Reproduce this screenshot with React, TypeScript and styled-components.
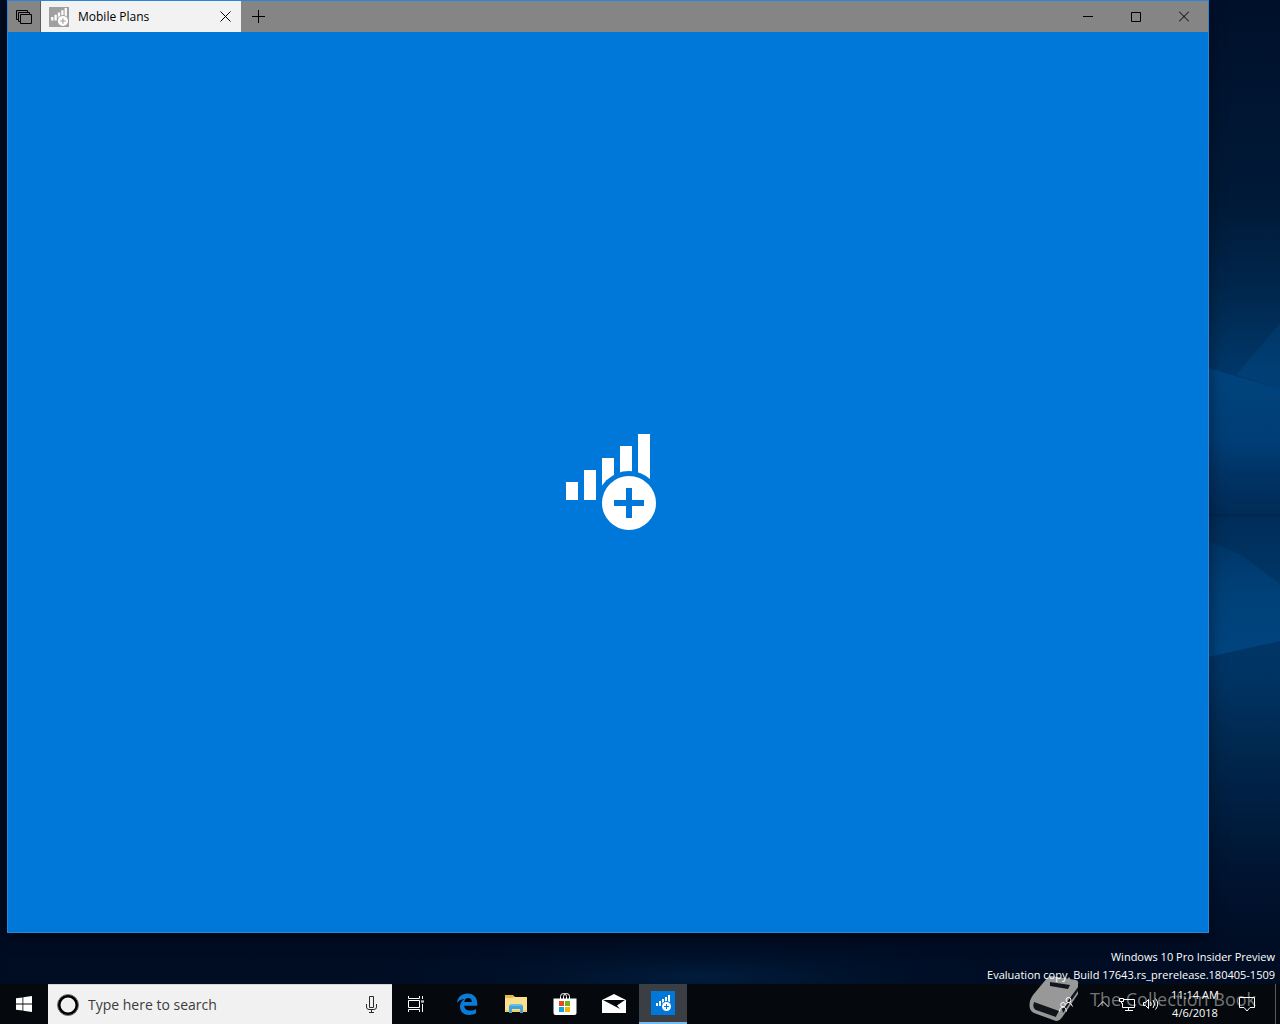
import React from "react";
import styled, { createGlobalStyle } from "styled-components";

const GlobalStyle = createGlobalStyle`
  *, *::before, *::after { box-sizing: border-box; }
  html, body { margin: 0; background: #000c20; }
  body { font-family: "Open Sans", "Noto Sans", sans-serif; font-size: 12px; }
  button, input { font: inherit; color: inherit; border: 0; padding: 0; margin: 0; background: none; border-radius: 0; }
  svg { display: block; flex: none; }
`;

const Screen = styled.div`
  position: relative;
  isolation: isolate;
  display: grid;
  grid-template-rows: 1fr 40px;
  min-height: 100vh;
  overflow: hidden;
`;

const Wallpaper = styled.svg`
  position: absolute;
  inset: 0;
  z-index: -1;
  width: 100%;
  height: 100%;
`;

const Desktop = styled.main`
  position: relative;
  z-index: 1;
  display: flex;
  padding: 0 71px 51px 7px;
`;

const Window = styled.section`
  flex: 1;
  display: flex;
  flex-direction: column;
  border: 1px solid #2b86d6;
  background: #0078d9;
  box-shadow: 0 4px 14px rgba(0, 0, 0, 0.5);
`;

const TitleBar = styled.header`
  display: flex;
  height: 31px;
  background: #858585;
  color: #000;
`;

const BarButton = styled.button<{ $width: number }>`
  display: grid;
  place-items: center;
  width: ${(p) => p.$width}px;
`;

const Tab = styled.div`
  display: flex;
  align-items: center;
  gap: 9px;
  width: 201px;
  padding: 0 8px;
  margin-right: 1px;
  background: #f2f2f2;
  border-left: 1px solid #5b5b5b;
`;

const TabIcon = styled.span`
  display: grid;
  place-items: center;
  width: 20px;
  height: 20px;
  background: #a0a0a0;
`;

const TabTitle = styled.span`
  flex: 1;
  line-height: 18px;
  white-space: nowrap;
`;

const WindowControls = styled.div`
  display: flex;
  margin-left: auto;
`;

const Splash = styled.div`
  flex: 1;
  display: grid;
  place-items: center;
`;

const BuildNotice = styled.p`
  position: absolute;
  right: 5px;
  bottom: 0;
  margin: 0;
  color: #fff;
  font-size: 11px;
  line-height: 18px;
  text-align: right;
  white-space: nowrap;
`;

const Taskbar = styled.footer`
  position: relative;
  display: flex;
  background: #05090d;
  color: #fff;
`;

const TaskButton = styled.button<{ $active?: boolean }>`
  display: grid;
  place-items: center;
  width: 48px;
  background: ${(p) => (p.$active ? "#3b3f44" : "transparent")};
  border-bottom: ${(p) => (p.$active ? "2px solid #76b9ed" : "0")};
`;

const Search = styled.label`
  display: flex;
  align-items: center;
  width: 344px;
  padding: 0 14px 0 8px;
  background: #f1f1f1;
  border-top: 1px solid #d0d5d8;
  color: #2b2b2b;
`;

const SearchInput = styled.input`
  flex: 1;
  min-width: 0;
  margin-left: 8px;
  font-size: 14px;
  outline: none;
  &::placeholder { color: #3c3c3c; opacity: 1; }
`;

const Pins = styled.nav`
  display: flex;
  gap: 1px;
  margin-left: 3px;
`;

const Tray = styled.div`
  position: relative;
  display: flex;
  margin-left: auto;
`;

const TrayButton = styled.button<{ $width: number }>`
  display: grid;
  place-items: center;
  width: ${(p) => p.$width}px;
`;

const Clock = styled.button`
  width: 64px;
  font-size: 11px;
  line-height: 18px;
  text-align: center;
  white-space: nowrap;
`;

const ShowDesktop = styled.button`
  width: 5px;
  margin-left: 8px;
  border-left: 1px solid #5a5d60;
`;

const Watermark = styled.div`
  position: absolute;
  right: 24px;
  bottom: 2px;
  display: flex;
  align-items: center;
  gap: 10px;
  color: rgba(190, 190, 190, 0.6);
  font-size: 18px;
  line-height: 24px;
  white-space: nowrap;
  pointer-events: none;
`;

function SignalPlus({ size, hole }: { size: number; hole: string }) {
  return (
    <svg width={size} height={size} viewBox="0 0 96 96" aria-hidden="true">
      <path fill="#fff" d="M6 48h12v18H6zM24 36h12v30H24zM42 24h12v20l-12 12zM60 12h12v32H60zM78 0h12v46H78z" />
      <circle cx="69" cy="69" r="32" fill={hole} />
      <circle cx="69" cy="69" r="27" fill="#fff" />
      <path d="M69 54v30M54 69h30" stroke={hole} strokeWidth="6" />
    </svg>
  );
}

function Stroke({ w, h, d }: { w: number; h: number; d: string }) {
  return (
    <svg width={w} height={h} viewBox={`0 0 ${w} ${h}`} fill="none" stroke="currentColor" aria-hidden="true">
      <path d={d} />
    </svg>
  );
}

const WindowsLogo = () => (
  <svg width="16" height="16" viewBox="0 0 16 16" fill="#fff" aria-hidden="true">
    <path d="M0 2.3 6.5 1.4v6.2H0zM7.3 1.3 16 0v7.6H7.3zM0 8.4h6.5v6.2L0 13.7zM7.3 8.4H16V16l-8.7-1.3z" />
  </svg>
);

const EdgeLogo = () => (
  <svg width="22" height="22" viewBox="0 0 22 22" fill="#0a7cd8" aria-hidden="true">
    <path d="M1 10C1.500 4 6 .5 11.500 .5c6.500 0 9.700 4.600 9.700 9.600v2.600H8.200c.2 3.300 2.700 4.900 6 4.900 2.200 0 4.200-.6 5.800-1.600v4.300c-2 1.100-4.300 1.600-6.700 1.600-5.500 0-9.300-3.300-9.300-8.500 0-3.200 1.700-5.900 4.500-7.500C4.800 6.300 2.400 7.600 1 10zm7.300-1.100h7.500c0-2.600-1.300-4-3.500-4-2.300 0-3.700 1.600-4 4z" />
  </svg>
);

const FolderIcon = () => (
  <svg width="22" height="20" viewBox="0 0 22 20" aria-hidden="true">
    <path fill="#e8b84a" d="M0 1h8l2 2h11v3H0z" />
    <path fill="#fae08c" d="M0 4h7l2-1h13v15H0z" />
    <path fill="#f2cf68" d="M0 16h22v2H0z" />
    <path fill="#41a5d8" d="M4 19v-7l2-2h10l2 2v7h-3v-4H7v4z" />
    <path fill="#67bfe8" d="M6 10h10l2 2H4z" />
  </svg>
);

const StoreIcon = () => (
  <svg width="24" height="24" viewBox="0 0 24 24" aria-hidden="true">
    <path d="M7.500 7V4.500a3 3 0 0 1 6 0V7M10.500 7V4.500a3 3 0 0 1 6 0V7" fill="none" stroke="#fff" />
    <path fill="#fff" d="M.5 6.500h23V21q0 2-2 2h-19q-2 0-2-2z" />
    <path fill="#e8491d" d="M6 9h5v5H6z" />
    <path fill="#6fb51b" d="M12 9h5v5h-5z" />
    <path fill="#10a3e8" d="M6 15h5v5H6z" />
    <path fill="#f8b400" d="M12 15h5v5h-5z" />
  </svg>
);

const MailIcon = () => (
  <svg width="24" height="20" viewBox="0 0 24 20" aria-hidden="true">
    <path fill="#fff" d="M0 6 12 0l12 6v13H0z" />
    <path fill="#05090d" d="M1 6h22l-8 5.500 3 3.500z" />
  </svg>
);

const BookIcon = () => (
  <svg width="51" height="46" viewBox="0 0 51 46" aria-hidden="true">
    <path fill="#a9a9a9" fillOpacity=".9" d="M19 1q1-1 3-1l25 4q3 1 2 4v10L34 40q-3 5-7 5L5 37q-6-3-4-12 1-3 3-6z" />
    <path fill="#10161c" d="M21 6l20 3-2 4-18-3zM5 26l25 9q-3 5-3 6L7 34q-4-2-2-8zM33 33 49 11v4L34 37z" />
  </svg>
);

export default function App() {
  return (
    <>
      <GlobalStyle />
      <Screen>
        <Wallpaper viewBox="0 0 1280 1024" preserveAspectRatio="none" aria-hidden="true">
          <defs>
            <linearGradient id="side" x1="0" y1="0" x2="0" y2="1">
              <stop offset="0" stopColor="#00102a" />
              <stop offset=".2" stopColor="#001a38" />
              <stop offset=".29" stopColor="#00284f" />
              <stop offset=".36" stopColor="#003768" />
              <stop offset=".43" stopColor="#003a70" />
              <stop offset=".5" stopColor="#002c58" />
              <stop offset=".58" stopColor="#003768" />
              <stop offset=".66" stopColor="#003464" />
              <stop offset=".74" stopColor="#00264c" />
              <stop offset=".84" stopColor="#001634" />
              <stop offset=".92" stopColor="#000d24" />
              <stop offset="1" stopColor="#000b20" />
            </linearGradient>
            <radialGradient id="floor">
              <stop offset="0" stopColor="#001d3d" />
              <stop offset="1" stopColor="#000b20" stopOpacity="0" />
            </radialGradient>
            <linearGradient id="upper" x1="0" y1="0" x2="0" y2="1">
              <stop offset="0" stopColor="#0058a0" stopOpacity=".4" />
              <stop offset="1" stopColor="#0058a0" stopOpacity="0" />
            </linearGradient>
            <linearGradient id="lower" x1="0" y1="1" x2="0" y2="0">
              <stop offset="0" stopColor="#0058a0" stopOpacity=".45" />
              <stop offset="1" stopColor="#0058a0" stopOpacity=".15" />
            </linearGradient>
          </defs>
          <rect width="1280" height="1024" fill="url(#side)" />
          <rect width="8" height="1024" fill="#000c22" />
          <path d="M1236 375 1280 323v66z" fill="#0058a0" fillOpacity=".2" />
          <path d="M1208 368 1280 389v85h-72z" fill="url(#upper)" />
          <path d="M1208 541 1240 554l40 30v57l-72 16z" fill="url(#lower)" />
          <rect x="1208" y="514" width="72" height="3" fill="#002850" />
          <rect x="300" y="930" width="800" height="94" fill="url(#floor)" />
        </Wallpaper>

        <Desktop>
          <Window aria-label="Mobile Plans">
            <TitleBar>
              <BarButton $width={32} aria-label="Show set-aside tabs">
                <Stroke w={16} h={14} d="M.5 9.500v-9h11M2.500 11.500v-9h11M4.500 4.500h11v9h-11zM.5 9.500h2M2.500 11.500h2M11.500 .5v2M13.500 2.500v2" />
              </BarButton>
              <Tab>
                <TabIcon><SignalPlus size={18} hole="#a0a0a0" /></TabIcon>
                <TabTitle>Mobile Plans</TabTitle>
                <BarButton $width={16} aria-label="Close tab">
                  <Stroke w={11} h={11} d="M.5 .5l10 10M10.500 .5l-10 10" />
                </BarButton>
              </Tab>
              <BarButton $width={32} aria-label="New tab">
                <Stroke w={13} h={13} d="M6.500 0v13M0 6.500h13" />
              </BarButton>
              <WindowControls>
                <BarButton $width={48} aria-label="Minimize"><Stroke w={10} h={11} d="M0 5.500h10" /></BarButton>
                <BarButton $width={48} aria-label="Maximize"><Stroke w={10} h={11} d="M.5 1.500h9v9h-9z" /></BarButton>
                <BarButton $width={48} aria-label="Close"><Stroke w={10} h={11} d="M0 .5l10 10M10 .5l-10 10" /></BarButton>
              </WindowControls>
            </TitleBar>
            <Splash><SignalPlus size={96} hole="#0078d9" /></Splash>
          </Window>
          <BuildNotice>
            Windows 10 Pro Insider Preview<br />
            Evaluation copy. Build 17643.rs_prerelease.180405-1509
          </BuildNotice>
        </Desktop>

        <Taskbar>
          <TaskButton aria-label="Start"><WindowsLogo /></TaskButton>
          <Search>
            <svg width="24" height="24" viewBox="0 0 24 24" fill="none" aria-hidden="true">
              <circle cx="12" cy="12" r="9" stroke="#000" strokeWidth="3" />
              <circle cx="12" cy="12" r="10.500" stroke="#777" strokeWidth="1" />
            </svg>
            <SearchInput type="text" placeholder="Type here to search" aria-label="Type here to search" />
            <Stroke w={13} h={17} d="M4.500 .5h4v11h-4zM1.500 8v3q0 2.500 2.500 2.500h5q2.500 0 2.500-2.500V8M6.500 13.500v3M4 16.500h5" />
          </Search>
          <TaskButton aria-label="Task View">
            <Stroke w={17} h={16} d="M.5 0v2.500h11V0M.5 4.500h11v7H.5zM.5 16v-2.500h11V16M14.500 0v3M14.500 8v8M13 5h3M13 6h3" />
          </TaskButton>
          <Pins aria-label="Pinned apps">
            <TaskButton aria-label="Microsoft Edge"><EdgeLogo /></TaskButton>
            <TaskButton aria-label="File Explorer"><FolderIcon /></TaskButton>
            <TaskButton aria-label="Microsoft Store"><StoreIcon /></TaskButton>
            <TaskButton aria-label="Mail"><MailIcon /></TaskButton>
            <TaskButton $active aria-label="Mobile Plans">
              <svg width="24" height="24" viewBox="0 0 24 24" aria-hidden="true">
                <path fill="#0078d9" d="M0 0h24v24H0z" />
                <path fill="#fff" d="M5 12h2v3H5zM8 10h2v5H8zM11 8h2v5h-2zM14 6h2v5h-2zM17 4h2v8h-2z" />
                <circle cx="15.500" cy="15.500" r="5.500" fill="#0078d9" />
                <circle cx="15.500" cy="15.500" r="4.500" fill="#fff" />
                <path d="M15.500 13v5M13 15.500h5" stroke="#0078d9" />
              </svg>
            </TaskButton>
          </Pins>
          <Watermark><BookIcon />The Collection Book</Watermark>
          <Tray>
            <TrayButton $width={48} aria-label="People">
              <Stroke w={16} h={16} d="M10.500 1.500a2.500 2.500 0 1 1 0 5 2.500 2.500 0 1 1 0-5zM7.500 9.500q.5-3 3-3t4 4M5 6.500a2.200 2.200 0 1 1 0 4.500 2.200 2.200 0 1 1 0-4.500zM1.500 15.500q.5-4.500 3.500-4.500t3.500 4.500" />
            </TrayButton>
            <TrayButton $width={25} aria-label="Show hidden icons">
              <Stroke w={12} h={8} d="M.5 7 6 1.500 11.500 7" />
            </TrayButton>
            <TrayButton $width={24} aria-label="Network">
              <Stroke w={16} h={14} d="M5 2.500h10.500v8h-12V6M9.500 10.500v3M6 13.500h8M.5 1.500h4v3h-4zM2.500 4.500v2" />
            </TrayButton>
            <TrayButton $width={24} aria-label="Volume">
              <Stroke w={16} h={14} d="M.5 5.500h2l3-3v9l-3-3h-2zM7.500 5q1.500 2 0 4M10 3q3 4 0 8M12.500 1.500q4.500 5.500 0 11" />
            </TrayButton>
            <Clock>11:14 AM<br />4/6/2018</Clock>
            <TrayButton $width={40} aria-label="Action center">
              <Stroke w={16} h={15} d="M.5 .5h15v10h-4.500l-3 3.500-3-3.500H.5z" />
            </TrayButton>
            <ShowDesktop aria-label="Show desktop" />
          </Tray>
        </Taskbar>
      </Screen>
    </>
  );
}
